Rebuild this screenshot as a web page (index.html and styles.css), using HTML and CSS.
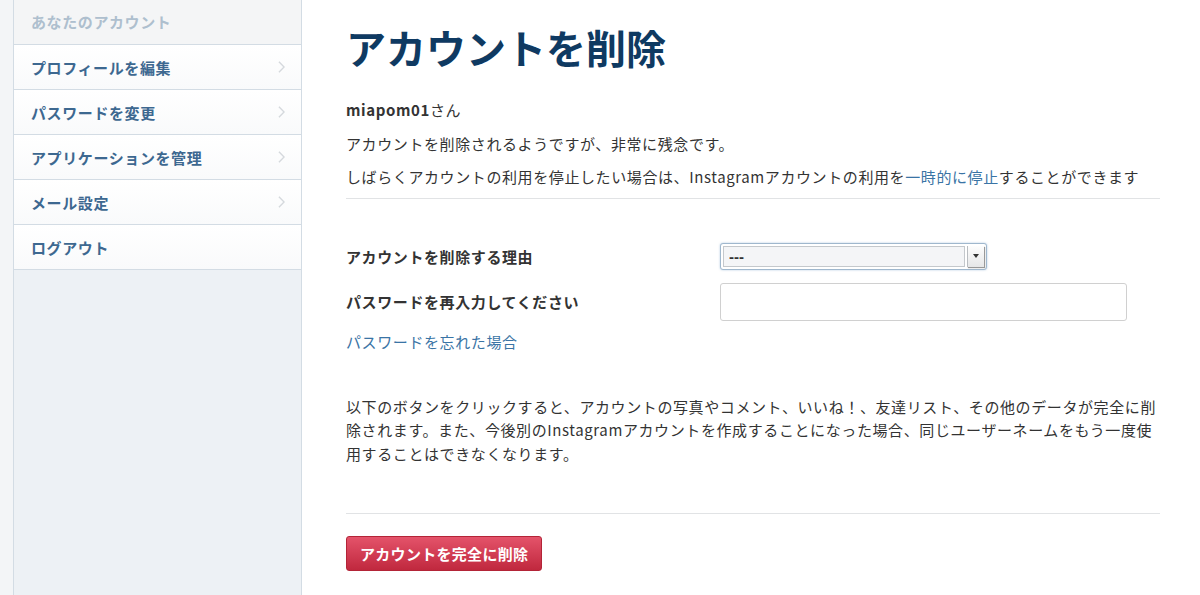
FILE: index.html
```html
<!DOCTYPE html>
<html lang="ja">
<head>
    <meta charset="UTF-8">
    <meta name="viewport" content="width=device-width, initial-scale=1.0">
    <title>アカウントを削除</title>
    <link rel="stylesheet" href="styles.css">
</head>
<body>
    <div class="page">
        <div class="gutter"></div>
        <nav class="sidebar">
            <div class="side-title">あなたのアカウント</div>
            <ul class="menu">
                <li><a href="#">プロフィールを編集<svg class="chev" viewBox="0 0 8 14" width="7" height="12"><polyline points="1,1 7,7 1,13" /></svg></a></li>
                <li><a href="#">パスワードを変更<svg class="chev" viewBox="0 0 8 14" width="7" height="12"><polyline points="1,1 7,7 1,13" /></svg></a></li>
                <li><a href="#">アプリケーションを管理<svg class="chev" viewBox="0 0 8 14" width="7" height="12"><polyline points="1,1 7,7 1,13" /></svg></a></li>
                <li><a href="#">メール設定<svg class="chev" viewBox="0 0 8 14" width="7" height="12"><polyline points="1,1 7,7 1,13" /></svg></a></li>
                <li><a href="#">ログアウト</a></li>
            </ul>
        </nav>

        <main class="content">
            <h1>アカウントを削除</h1>
            <p class="line"><b>miapom01</b>さん</p>
            <p class="line">アカウントを削除されるようですが、非常に残念です。</p>
            <p class="line">しばらくアカウントの利用を停止したい場合は、Instagramアカウントの利用を<a href="#">一時的に停止</a>することができます</p>
            <hr>

            <form class="delete-form" onsubmit="event.preventDefault()">
                <div class="row">
                    <label for="reason">アカウントを削除する理由</label>
                    <div class="select-wrap">
                        <select id="reason">
                            <option>---</option>
                        </select>
                        <span class="select-btn"></span>
                    </div>
                </div>
                <div class="row">
                    <label for="password">パスワードを再入力してください</label>
                    <input type="password" id="password">
                </div>
                <a class="forgot" href="#">パスワードを忘れた場合</a>

                <p class="warning">以下のボタンをクリックすると、アカウントの写真やコメント、いいね！、友達リスト、その他のデータが完全に削除されます。また、今後別のInstagramアカウントを作成することになった場合、同じユーザーネームをもう一度使用することはできなくなります。</p>
                <hr>
                <button type="submit">アカウントを完全に削除</button>
            </form>
        </main>
    </div>
</body>
</html>
```

FILE: styles.css
```css
* {
    margin: 0;
    padding: 0;
    box-sizing: border-box;
}

body {
    font-family: "Noto Sans CJK JP", "Noto Sans", sans-serif;
    font-size: 15px;
    color: #333;
    background: white;
}

.page {
    display: flex;
    min-height: 595px;
}

.gutter {
    width: 14px;
    background: #f3f5f7;
    border-right: 1px solid #d3dce4;
}

.sidebar {
    width: 288px;
    background: #edf1f5;
    border-right: 1px solid #d3dce4;
}

.side-title {
    height: 45px;
    line-height: 44px;
    padding-left: 17px;
    background: #f4f5f6;
    color: #aebfce;
    font-weight: bold;
    letter-spacing: 0.6px;
    border-bottom: 1px solid #d3dce4;
}

.menu {
    list-style: none;
}

.menu li {
    border-bottom: 1px solid #d3dce4;
    background: linear-gradient(#ffffff, #f9fafb);
}

.menu a {
    display: flex;
    justify-content: space-between;
    align-items: center;
    height: 44px;
    padding: 0 16px 0 17px;
    color: #3d6890;
    font-weight: bold;
    letter-spacing: 0.6px;
    text-decoration: none;
}

.chev polyline {
    fill: none;
    stroke: #d5d9dd;
    stroke-width: 1.6;
}

.content {
    flex: 1;
    padding: 20px 40px 0 44px;
}

h1 {
    font-size: 40px;
    line-height: 54px;
    color: #0f3a62;
    margin-bottom: 19px;
}

.line {
    line-height: 33.5px;
    letter-spacing: 0.6px;
}

a {
    color: #3a74a5;
    text-decoration: none;
}

hr {
    border: none;
    border-top: 1px solid #e1e3e5;
    margin-top: 4px;
}

.delete-form {
    margin-top: 39px;
}

.row {
    display: flex;
    align-items: center;
    height: 38px;
    margin-bottom: 7px;
}

.row label {
    width: 374px;
    font-weight: bold;
    letter-spacing: 0.6px;
}

.select-wrap {
    position: relative;
    width: 267px;
    height: 27px;
    border: 1px solid #9fb7cd;
    border-radius: 3px;
    box-shadow: 0 0 2px rgba(90, 140, 190, 0.5);
    background: #fff;
    padding: 2px;
    display: flex;
}

.select-wrap select {
    appearance: none;
    -webkit-appearance: none;
    flex: 1;
    height: 21px;
    border: 1px solid #c4c8cc;
    background: #f4f5f7;
    font-family: "Liberation Sans", sans-serif;
    font-size: 15px;
    font-weight: bold;
    color: #333;
    padding-left: 5px;
    outline: none;
}

.select-btn {
    width: 17px;
    margin-left: 2px;
    background: linear-gradient(#fdfdfd, #e6e7e8);
    border-left: 1px solid #b9bdc1;
    box-shadow: 1px 1px 1px #999;
    position: relative;
}

.select-btn::after {
    content: "";
    position: absolute;
    left: 5px;
    top: 8px;
    border-left: 3.5px solid transparent;
    border-right: 3.5px solid transparent;
    border-top: 4px solid #333;
}

input[type="password"] {
    width: 407px;
    height: 38px;
    border: 1px solid #d0d0d0;
    border-radius: 3px;
    padding: 0 8px;
}

.forgot {
    display: block;
    line-height: 22px;
    margin-top: 10px;
    letter-spacing: 0.6px;
}

.warning {
    margin-top: 42px;
    line-height: 23.5px;
    letter-spacing: 0.6px;
    margin-bottom: 48px;
}

.delete-form hr {
    margin-top: 0;
}

button {
    margin-top: 22px;
    height: 35px;
    padding: 0 13px;
    border: 1px solid #b32437;
    border-radius: 3px;
    background: linear-gradient(#e4536a, #c0283e);
    color: white;
    font-family: "Noto Sans CJK JP", sans-serif;
    font-size: 15px;
    font-weight: bold;
    letter-spacing: 0.3px;
    cursor: pointer;
}
```
